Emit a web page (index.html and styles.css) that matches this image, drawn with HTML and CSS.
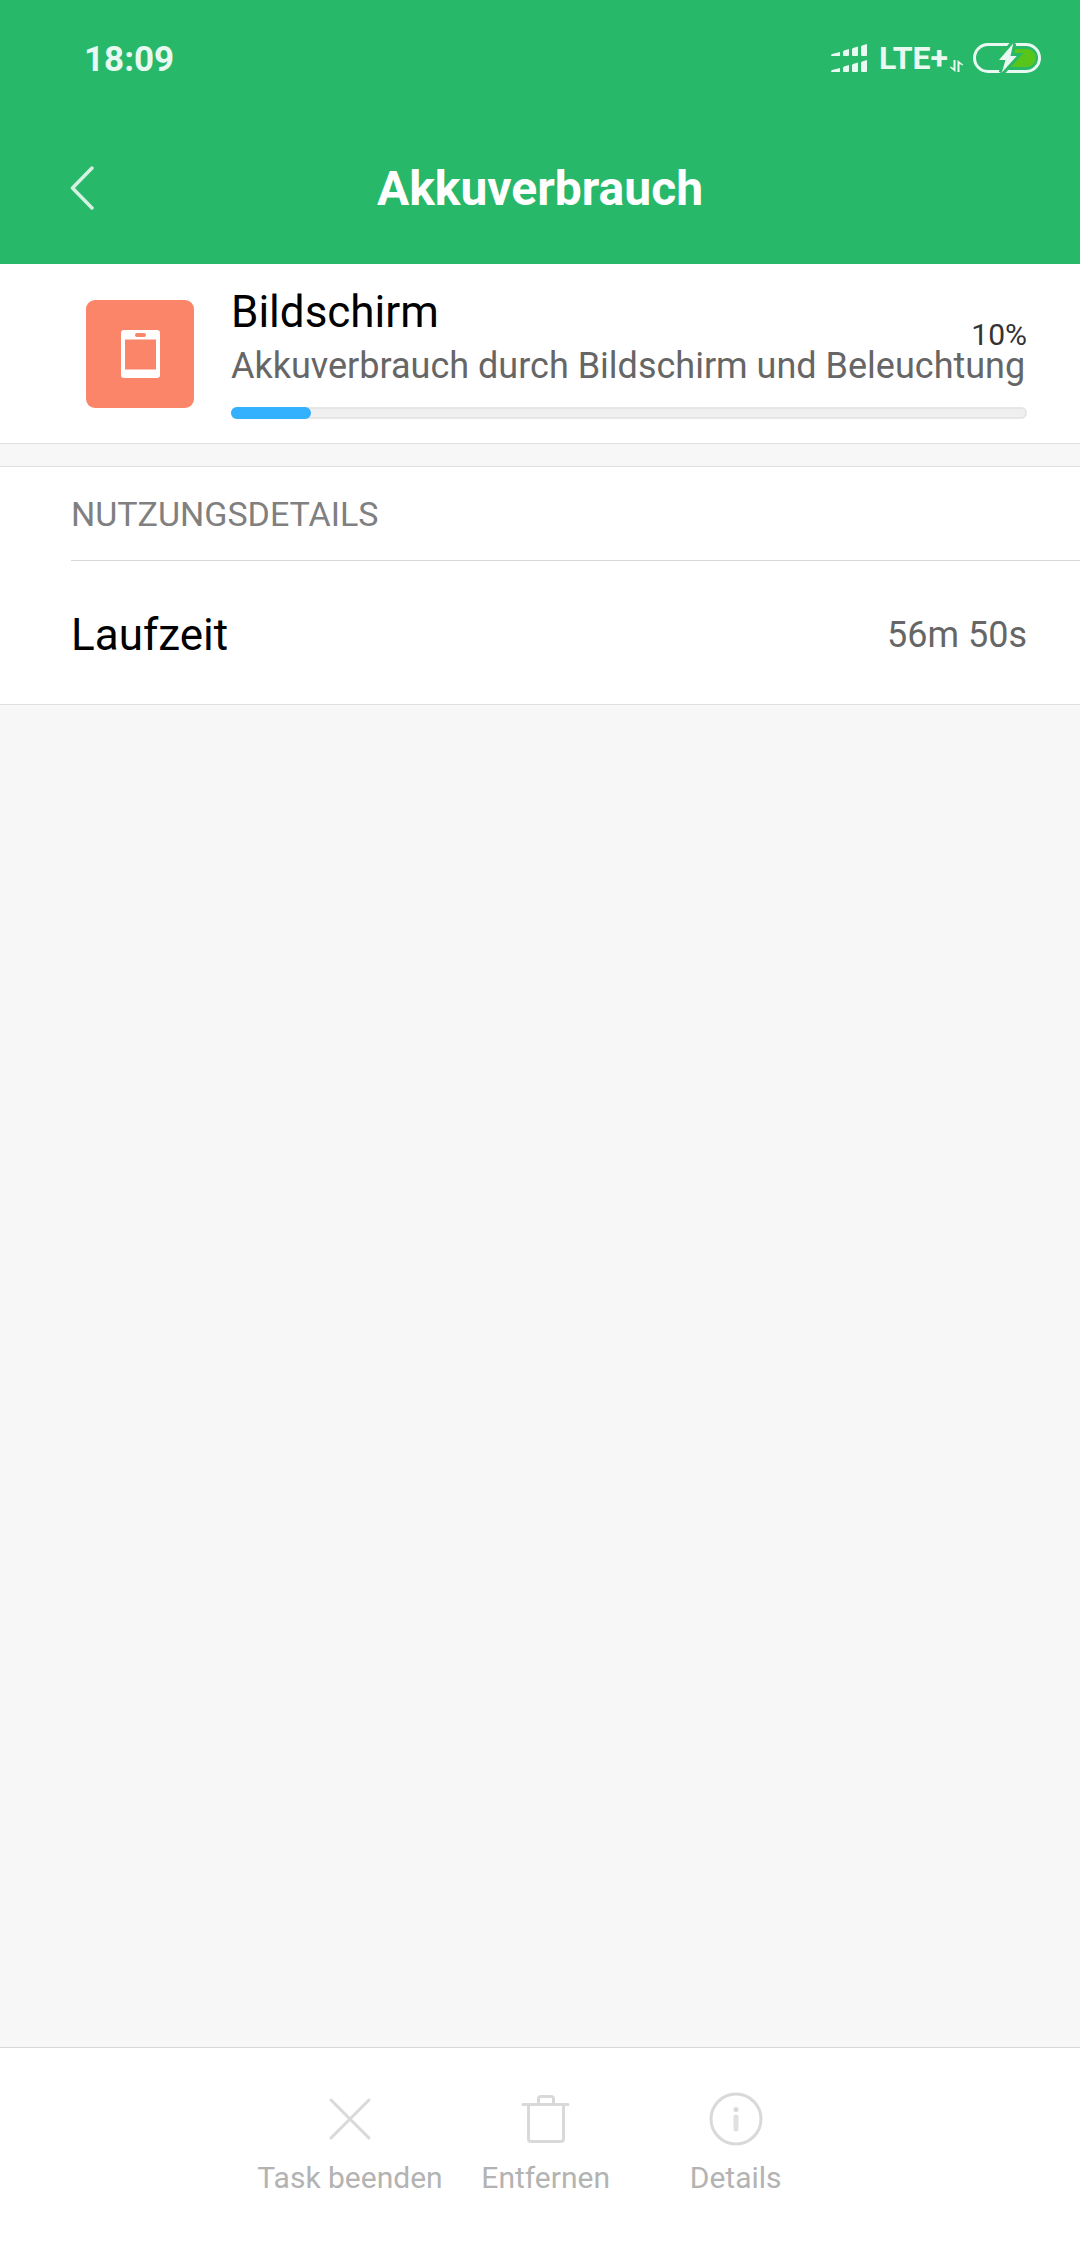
FILE: index.html
```html
<!DOCTYPE html>
<html lang="de">
<head>
    <meta charset="UTF-8">
    <meta name="viewport" content="width=device-width, initial-scale=1.0">
    <title>Akkuverbrauch</title>
    <link rel="stylesheet" href="styles.css">
</head>
<body>
    <header class="header">
        <!-- Status bar -->
        <div class="status-bar">
            <span class="time">18:09</span>
            <div class="status-icons">
                <svg class="signal" width="36" height="28" viewBox="0 0 36 28" fill="currentColor" aria-hidden="true">
                    <path d="M1 10 L9 8 V12 H1 Q0 12 0 11 Z"/>
                    <path d="M13 6.500 L18 5 V11 Q18 12 17 12 H13 Q12 12 12 11 V7.500 Z"/>
                    <path d="M22 4 L27 2.500 V11 Q27 12 26 12 H22 Q21 12 21 11 V5 Z"/>
                    <path d="M31 1.500 L36 0 V11 Q36 12 35 12 H31 Q30 12 30 11 V2.500 Z"/>
                    <path d="M1 26 L9 24 V28 H1 Q0 28 0 27 Z"/>
                    <path d="M13 22.500 L18 21 V27 Q18 28 17 28 H13 Q12 28 12 27 V23.500 Z"/>
                    <path d="M22 20 L27 18.500 V27 Q27 28 26 28 H22 Q21 28 21 27 V21 Z"/>
                    <path d="M31 17.500 L36 16 V27 Q36 28 35 28 H31 Q30 28 30 27 V18.500 Z"/>
                </svg>
                <span class="network">LTE+</span>
                <svg class="data" width="13" height="12" viewBox="0 0 13 12" fill="currentColor" aria-hidden="true">
                    <path d="M3.500 0 H5.500 V12 L0 7.500 V6.500 L3.500 8 Z"/>
                    <path d="M7.500 12 H9.500 V4 L13 5.500 V4.500 L7.500 0 Z"/>
                </svg>
                <svg class="battery" width="68" height="30" viewBox="0 0 68 30" aria-hidden="true">
                    <rect x="1.500" y="1.500" width="65" height="27" rx="13.500" fill="none" stroke="currentColor" stroke-width="3"/>
                    <path class="charge" d="M29 6 H54 A9 9 0 0 1 54 24 H36 Z"/>
                    <path class="bolt-gap" d="M40.300 0.300 L26 17 H32.500 L28.700 29.700 L43.700 13 H37.500 Z"/>
                    <path d="M40.300 0.300 L26 17 H32.500 L28.700 29.700 L43.700 13 H37.500 Z" fill="currentColor"/>
                </svg>
            </div>
        </div>

        <!-- Title bar -->
        <div class="title-bar">
            <button type="button" class="back" aria-label="Zurück">
                <svg width="24" height="44" viewBox="0 0 24 44" fill="none" stroke="currentColor" stroke-width="3.500" stroke-linecap="round" stroke-linejoin="round" aria-hidden="true">
                    <path d="M22 2 L2.500 22 L22 42"/>
                </svg>
            </button>
            <h1>Akkuverbrauch</h1>
        </div>
    </header>

    <main>
        <section class="card summary">
            <svg class="app-icon" width="108" height="108" viewBox="0 0 108 108" aria-hidden="true">
                <rect width="108" height="108" rx="9" fill="#fb8569"/>
                <rect x="35" y="30" width="39" height="48" rx="3" fill="#fff"/>
                <rect x="39" y="39.500" width="31" height="30" fill="#fb8569"/>
                <rect x="49" y="33" width="11" height="4" rx="2" fill="#fb8569"/>
            </svg>
            <div class="summary-body">
                <h2>Bildschirm</h2>
                <p>Akkuverbrauch durch Bildschirm und Beleuchtung</p>
                <span class="percent" id="percent">10%</span>
                <progress value="10" max="100" aria-labelledby="percent"></progress>
            </div>
        </section>

        <section class="card details">
            <h3>NUTZUNGSDETAILS</h3>
            <dl class="row">
                <dt>Laufzeit</dt>
                <dd>56m 50s</dd>
            </dl>
        </section>
    </main>

    <!-- Bottom actions -->
    <footer class="toolbar">
        <button type="button">
            <svg width="54" height="54" viewBox="0 0 54 54" aria-hidden="true">
                <path d="M8 8 L46 46 M46 8 L8 46"/>
            </svg>
            Task beenden
        </button>
        <button type="button">
            <svg width="54" height="54" viewBox="0 0 54 54" aria-hidden="true">
                <path d="M4 12.500 H49 M9.500 12.500 V47 Q9.500 49.500 12 49.500 H42 Q44.500 49.500 44.500 47 V12.500 M19.500 12 V7 Q19.500 4.500 22 4.500 H32 Q34.500 4.500 34.500 7 V12"/>
            </svg>
            Entfernen
        </button>
        <button type="button">
            <svg width="54" height="54" viewBox="0 0 54 54" aria-hidden="true">
                <circle cx="27" cy="27" r="25"/>
                <circle class="dot" cx="27" cy="17.500" r="2.500"/>
                <path class="stem" d="M27 25 V37"/>
            </svg>
            Details
        </button>
    </footer>
</body>
</html>
```

FILE: styles.css
```css
:root {
    --green: #28b869;
    --page-bg: #f7f7f7;
    --line: #e0e0e0;
    --text-grey: #666;
}

* {
    margin: 0;
    padding: 0;
    box-sizing: border-box;
    font-family: Roboto, 'Noto Sans', sans-serif;
}

body {
    background-color: var(--page-bg);
    min-height: 100vh;
    display: flex;
    flex-direction: column;
}

svg {
    display: block;
    flex-shrink: 0;
}

button {
    background: none;
    border: none;
    cursor: pointer;
}

.header {
    background-color: var(--green);
    color: #fff;
}

.status-bar {
    display: flex;
    justify-content: space-between;
    align-items: center;
    height: 112px;
    padding: 6px 39px 0 84px;
    color: #e9f8f0;
}

.time {
    font-size: 35px;
    font-weight: bold;
}

.status-icons {
    display: flex;
    align-items: center;
    padding-bottom: 2px;
}

.network {
    margin-left: 12px;
    font-size: 32px;
    font-weight: bold;
    line-height: 32px;
}

.data {
    align-self: flex-end;
    margin-left: 2px;
    margin-bottom: 2px;
}

.battery {
    margin-left: 10px;
}

.battery .charge {
    fill: #58c51a;
}

.battery .bolt-gap {
    fill: var(--green);
    stroke: var(--green);
    stroke-width: 6;
}

.title-bar {
    display: grid;
    grid-template-columns: 1fr auto 1fr;
    align-items: center;
    height: 152px;
    padding: 0 70px;
}

.back {
    justify-self: start;
    color: #d4f1e1;
}

h1 {
    font-size: 48px;
    font-weight: bold;
}

.card {
    background-color: #fff;
    border-bottom: 1px solid var(--line);
}

.summary {
    display: flex;
    align-items: center;
    gap: 37px;
    padding: 20px 53px 24px 86px;
}

.app-icon {
    margin-top: 4px;
}

.summary-body {
    position: relative;
    flex: 1;
}

h2,
dt {
    font-size: 44px;
    font-weight: normal;
    line-height: 56px;
    color: #000;
}

.summary p {
    font-size: 36px;
    line-height: 52px;
    color: var(--text-grey);
    white-space: nowrap;
}

/* sits over the title and description lines */
.percent {
    position: absolute;
    top: 33px;
    right: 0;
    font-size: 30px;
    line-height: 36px;
    color: #333;
}

progress {
    display: block;
    appearance: none;
    width: 100%;
    height: 12px;
    margin-top: 15px;
    border: none;
}

progress::-webkit-progress-bar {
    background-color: #efefef;
    border-radius: 6px;
    box-shadow: inset 0 0 0 2px #e6e6e6;
}

progress::-webkit-progress-value {
    background-color: #33b1ff;
    border-radius: 6px;
}

.details {
    margin-top: 22px;
    padding-left: 71px;
    border-top: 1px solid var(--line);
}

h3 {
    padding: 24px 0 23px;
    font-size: 34px;
    font-weight: normal;
    line-height: 46px;
    color: #808080;
    border-bottom: 1px solid #d8d8d8;
}

.row {
    display: flex;
    justify-content: space-between;
    align-items: center;
    padding: 46px 53px 41px 0;
}

dd {
    font-size: 36px;
    line-height: 52px;
    color: var(--text-grey);
}

.toolbar {
    display: flex;
    justify-content: center;
    margin-top: auto;
    padding: 44px 0 50px;
    background-color: #fff;
    border-top: 1px solid #d8d8d8;
}

.toolbar button {
    display: flex;
    flex-direction: column;
    align-items: center;
    gap: 12px;
    min-width: 190px;
    padding: 0 8px;
    font-size: 30px;
    line-height: 40px;
    color: #b3b3b3;
}

.toolbar svg {
    fill: none;
    stroke: #d9d9d9;
    stroke-width: 3;
    stroke-linecap: round;
}

.toolbar .dot {
    fill: #d9d9d9;
    stroke: none;
}

.toolbar .stem {
    stroke: #e0e0e0;
    stroke-width: 5;
}
```
